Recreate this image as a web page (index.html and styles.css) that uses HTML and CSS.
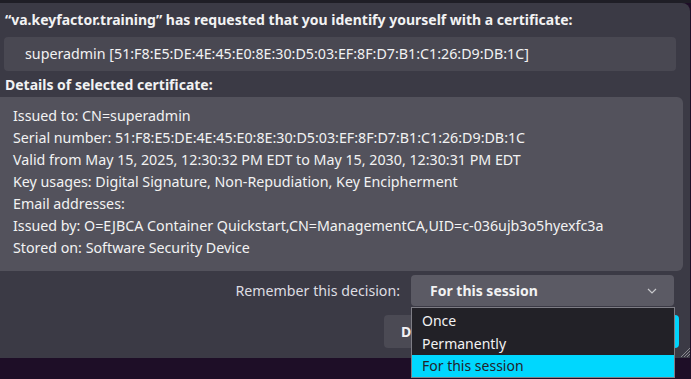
FILE: index.html
```html
<!DOCTYPE html>
<html>
<head>
<meta charset="utf-8">
<link rel="stylesheet" href="styles.css">
</head>
<body>
<div class="topstrip"></div>
<div class="dialog">
  <div class="title">“va.keyfactor.training” has requested that you identify yourself with a certificate:</div>
  <div class="certbox">superadmin [51:F8:E5:DE:4E:45:E0:8E:30:D5:03:EF:8F:D7:B1:C1:26:D9:DB:1C]</div>
  <div class="heading">Details of selected certificate:</div>
  <div class="details">
    <div>Issued to: CN=superadmin</div>
    <div>Serial number: 51:F8:E5:DE:4E:45:E0:8E:30:D5:03:EF:8F:D7:B1:C1:26:D9:DB:1C</div>
    <div>Valid from May 15, 2025, 12:30:32 PM EDT to May 15, 2030, 12:30:31 PM EDT</div>
    <div>Key usages: Digital Signature, Non-Repudiation, Key Encipherment</div>
    <div>Email addresses:</div>
    <div>Issued by: O=EJBCA Container Quickstart,CN=ManagementCA,UID=c-036ujb3o5hyexfc3a</div>
    <div>Stored on: Software Security Device</div>
  </div>
  <div class="remember">
    <span class="rlabel">Remember this decision:</span>
    <div class="select">
      <span>For this session</span>
      <svg class="chev" width="10" height="6" viewBox="0 0 10 6"><path d="M1 1 L5 5 L9 1" fill="none" stroke="#c8c8cc" stroke-width="1.2"/></svg>
    </div>
  </div>
  <div class="buttons">
    <button class="btn">Don’t Send</button>
    <button class="btn primary">OK</button>
  </div>
  <svg class="grip" width="9" height="9" viewBox="0 0 9 9"><path d="M9 0 L0 9 M9 3 L3 9 M9 6 L6 9" stroke="#8a8990" stroke-width="1"/></svg>
</div>
<div class="popup">
  <div class="opt">Once</div>
  <div class="opt">Permanently</div>
  <div class="opt sel">For this session</div>
</div>
</body>
</html>
```

FILE: styles.css
```css
html, body {
  margin: 0;
  padding: 0;
}
body {
  width: 691px;
  height: 379px;
  overflow: hidden;
  background: #1e0e27;
  font-family: "Noto Sans", sans-serif;
  color: #f2f2f3;
  position: relative;
}
.topstrip {
  height: 3px;
  background: #1f1e26;
}
.dialog {
  position: relative;
  width: 690px;
  height: 355px;
  background: #3b3a45;
  border-top-right-radius: 8px;
  display: flex;
  flex-direction: column;
  box-sizing: border-box;
  padding-top: 8px;
}
.title {
  font-weight: 700;
  font-size: 14px;
  line-height: 18px;
  padding-left: 5px;
  white-space: nowrap;
}
.certbox {
  margin: 8px 0 0 4px;
  width: 672px;
  height: 34px;
  box-sizing: border-box;
  background: #494852;
  border-radius: 4px;
  padding-left: 21px;
  font-size: 14.25px;
  line-height: 34px;
  white-space: nowrap;
}
.heading {
  font-weight: 700;
  font-size: 14px;
  line-height: 18px;
  margin-top: 5px;
  padding-left: 5px;
}
.details {
  margin-top: 3px;
  width: 683px;
  height: 174px;
  box-sizing: border-box;
  background: #53525c;
  border-radius: 0 6px 6px 0;
  padding: 8px 0 0 13px;
  font-size: 14.25px;
  line-height: 22px;
  white-space: nowrap;
}
.remember {
  display: flex;
  align-items: center;
  justify-content: flex-end;
  gap: 11px;
  margin-top: 4px;
  padding-right: 16px;
}
.rlabel {
  font-size: 14.2px;
  color: #dedde2;
}
.select {
  width: 263px;
  height: 31px;
  box-sizing: border-box;
  background: #5b5a64;
  border-radius: 4px;
  display: flex;
  align-items: center;
  justify-content: space-between;
  padding: 0 17px 0 19px;
  font-weight: 700;
  font-size: 14px;
}
.buttons {
  display: flex;
  justify-content: flex-end;
  gap: 10px;
  margin-top: 9px;
  padding-right: 11px;
}
.btn {
  height: 33px;
  border: none;
  border-radius: 4px;
  background: #4b4a54;
  color: #f2f2f3;
  font-family: inherit;
  font-weight: 700;
  font-size: 14px;
  padding: 0 17px;
  width: 155px;
  text-align: left;
}
.btn.primary {
  background: #00d4fc;
  color: #1c1b22;
  width: 130px;
}
.grip {
  position: absolute;
  right: 0;
  bottom: 1px;
}
.popup {
  position: absolute;
  left: 411px;
  top: 307px;
  width: 264px;
  height: 71px;
  box-sizing: border-box;
  background: #222127;
  border: 1px solid #7e7d85;
  padding-top: 1px;
}
.opt {
  height: 23px;
  line-height: 23px;
  padding-left: 10px;
  font-size: 14px;
  color: #f2f2f3;
}
.opt.sel {
  background: #00d7fe;
  color: #23222a;
  height: 22px;
  line-height: 22px;
}
```
